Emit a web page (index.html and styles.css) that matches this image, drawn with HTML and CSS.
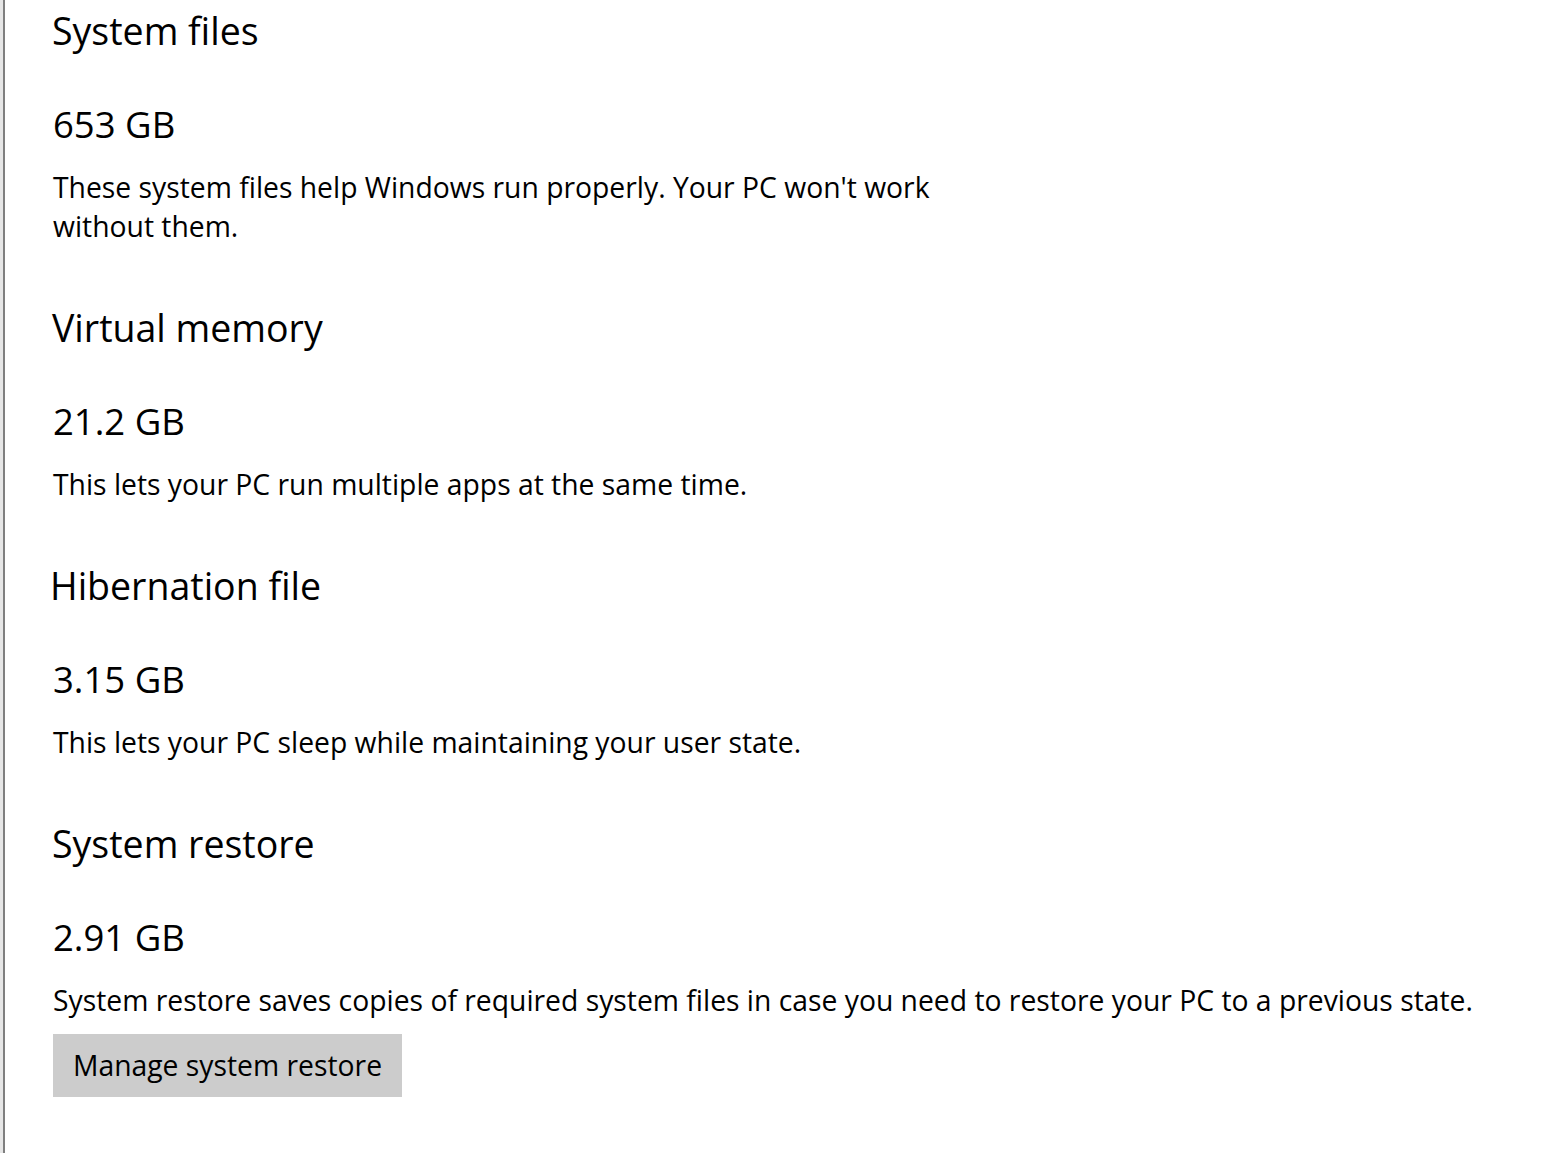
FILE: index.html
```html
<!DOCTYPE html>
<html lang="en">
  <head>
    <meta charset="UTF-8" />
    <meta name="viewport" content="width=device-width, initial-scale=1.0" />
    <title>System &amp; reserved</title>
    <link rel="stylesheet" href="styles.css">
  </head>
  <body>
    <div class="frame">
      <div class="content">
        <div class="section">
          <h2>System files</h2>
          <div class="size">653 GB</div>
          <p class="desc narrow">
            These system files help Windows run properly. Your PC won't work without them.
          </p>
        </div>

        <div class="section">
          <h2>Virtual memory</h2>
          <div class="size">21.2 GB</div>
          <p class="desc">This lets your PC run multiple apps at the same time.</p>
        </div>

        <div class="section">
          <h2 class="shift">Hibernation file</h2>
          <div class="size">3.15 GB</div>
          <p class="desc">This lets your PC sleep while maintaining your user state.</p>
        </div>

        <div class="section">
          <h2>System restore</h2>
          <div class="size">2.91 GB</div>
          <p class="desc">
            System restore saves copies of required system files in case you need to restore your PC to a previous state.
          </p>
          <button class="action">Manage system restore</button>
        </div>
      </div>
    </div>
  </body>
</html>
```

FILE: styles.css
```css
html,
body {
  margin: 0;
  padding: 0;
  background: #ffffff;
}
body {
  font-family: "Open Sans", "Noto Sans", sans-serif;
  color: #000000;
  border-left: 3px solid #e6e6e6;
  min-height: 100vh;
  box-sizing: border-box;
}
.frame {
  border-left: 2px solid #7f7f7f;
  min-height: 100vh;
  box-sizing: border-box;
}
.content {
  padding: 6px 0 0 48px;
}
.section + .section {
  margin-top: 57px;
}
h2 {
  margin: 0 0 0 -1px;
  font-size: 37.5px;
  font-weight: normal;
  line-height: 50px;
}
h2.shift {
  margin-left: -3px;
}
.size {
  margin-top: 44px;
  font-size: 36.5px;
  line-height: 48px;
}
.desc {
  margin: 20px 0 0;
  font-size: 28.3px;
  line-height: 39px;
}
.narrow {
  max-width: 920px;
}
.action {
  display: block;
  margin-top: 14px;
  height: 63px;
  padding: 0 20px;
  border: none;
  border-radius: 0;
  background-color: #cccccc;
  color: #000000;
  font-family: "Open Sans", "Noto Sans", sans-serif;
  font-size: 28.3px;
  line-height: 63px;
  cursor: pointer;
}
```
